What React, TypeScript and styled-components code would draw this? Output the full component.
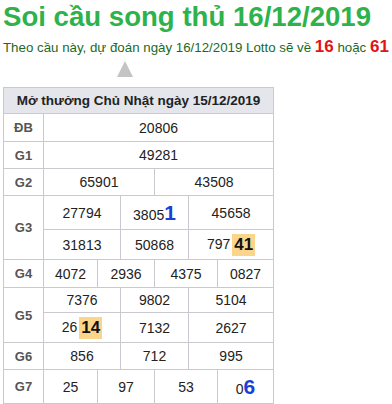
import styled, { createGlobalStyle } from "styled-components";

const GlobalStyle = createGlobalStyle`
  body {
    margin: 0;
    background: #fff;
    font-family: "Liberation Sans", Arial, sans-serif;
  }
`;

const Page = styled.div`
  padding: 0 3px;
  width: 392px;
  box-sizing: border-box;
`;

const Title = styled.h1`
  margin: 0;
  padding-top: 1px;
  font-size: 27.6px;
  line-height: 32px;
  font-weight: bold;
  color: #2eb24b;
  white-space: nowrap;
`;

const Lead = styled.p`
  margin: 4px 0 0;
  font-size: 13.3px;
  line-height: 20px;
  color: #1b6a1f;
  white-space: nowrap;
`;

const Hot = styled.b`
  color: #e01414;
  font-size: 17px;
`;

const Pointer = styled.div`
  width: 0;
  height: 0;
  margin: 3px 0 0 114px;
  border-left: 8px solid transparent;
  border-right: 8px solid transparent;
  border-bottom: 16px solid #c4c4c4;
`;

const Board = styled.table`
  margin-top: 10px;
  width: 270px;
  border-collapse: collapse;
  table-layout: fixed;
  font-size: 14px;
  color: #222;
`;

const Head = styled.th`
  height: 25px;
  padding: 0;
  background: #e4e6ec;
  border: 1px solid #c9c9cf;
  font-size: 13.5px;
  font-weight: bold;
  color: #222;
  white-space: nowrap;
`;

const Label = styled.td`
  padding: 0;
  border: 1px solid #c9c9cf;
  text-align: center;
  font-weight: bold;
  font-size: 13px;
  color: #555;
`;

const Cell = styled.td<{ $h: number }>`
  height: ${(p) => p.$h}px;
  padding: 0;
  border: 1px solid #c9c9cf;
  text-align: center;
  white-space: nowrap;
`;

const Mark = styled.span`
  display: inline-block;
  margin-left: 2px;
  padding: 0 2px;
  line-height: 22px;
  background: #fcd58c;
  font-weight: bold;
  font-size: 17px;
  color: #111;
  vertical-align: middle;
`;

const Blue = styled.b`
  color: #1a3fd8;
  font-size: 21px;
`;

const cols = [40, 54, 23, 34, 34, 29, 56];

export default function App() {
  return (
    <Page>
      <GlobalStyle />
      <Title>Soi cầu song thủ 16/12/2019</Title>
      <Lead>
        Theo cầu này, dự đoán ngày 16/12/2019 Lotto sẽ về <Hot>16</Hot> hoặc{" "}
        <Hot>61</Hot>
      </Lead>
      <Pointer />
      <Board>
        <colgroup>
          {cols.map((w, i) => (
            <col key={i} style={{ width: w }} />
          ))}
        </colgroup>
        <thead>
          <tr>
            <Head colSpan={7}>Mở thưởng Chủ Nhật ngày 15/12/2019</Head>
          </tr>
        </thead>
        <tbody>
          <tr>
            <Label>ĐB</Label>
            <Cell $h={27} colSpan={6}>20806</Cell>
          </tr>
          <tr>
            <Label>G1</Label>
            <Cell $h={26} colSpan={6}>49281</Cell>
          </tr>
          <tr>
            <Label>G2</Label>
            <Cell $h={26} colSpan={3}>65901</Cell>
            <Cell $h={26} colSpan={3}>43508</Cell>
          </tr>
          <tr>
            <Label rowSpan={2}>G3</Label>
            <Cell $h={33} colSpan={2}>27794</Cell>
            <Cell $h={33} colSpan={2}>
              3805<Blue>1</Blue>
            </Cell>
            <Cell $h={33} colSpan={2}>45658</Cell>
          </tr>
          <tr>
            <Cell $h={29} colSpan={2}>31813</Cell>
            <Cell $h={29} colSpan={2}>50868</Cell>
            <Cell $h={29} colSpan={2}>
              797<Mark>41</Mark>
            </Cell>
          </tr>
          <tr>
            <Label>G4</Label>
            <Cell $h={27}>4072</Cell>
            <Cell $h={27} colSpan={2}>2936</Cell>
            <Cell $h={27} colSpan={2}>4375</Cell>
            <Cell $h={27}>0827</Cell>
          </tr>
          <tr>
            <Label rowSpan={2}>G5</Label>
            <Cell $h={24} colSpan={2}>7376</Cell>
            <Cell $h={24} colSpan={2}>9802</Cell>
            <Cell $h={24} colSpan={2}>5104</Cell>
          </tr>
          <tr>
            <Cell $h={29} colSpan={2}>
              26<Mark>14</Mark>
            </Cell>
            <Cell $h={29} colSpan={2}>7132</Cell>
            <Cell $h={29} colSpan={2}>2627</Cell>
          </tr>
          <tr>
            <Label>G6</Label>
            <Cell $h={26} colSpan={2}>856</Cell>
            <Cell $h={26} colSpan={2}>712</Cell>
            <Cell $h={26} colSpan={2}>995</Cell>
          </tr>
          <tr>
            <Label>G7</Label>
            <Cell $h={33}>25</Cell>
            <Cell $h={33} colSpan={2}>97</Cell>
            <Cell $h={33} colSpan={2}>53</Cell>
            <Cell $h={33}>
              0<Blue>6</Blue>
            </Cell>
          </tr>
        </tbody>
      </Board>
    </Page>
  );
}
